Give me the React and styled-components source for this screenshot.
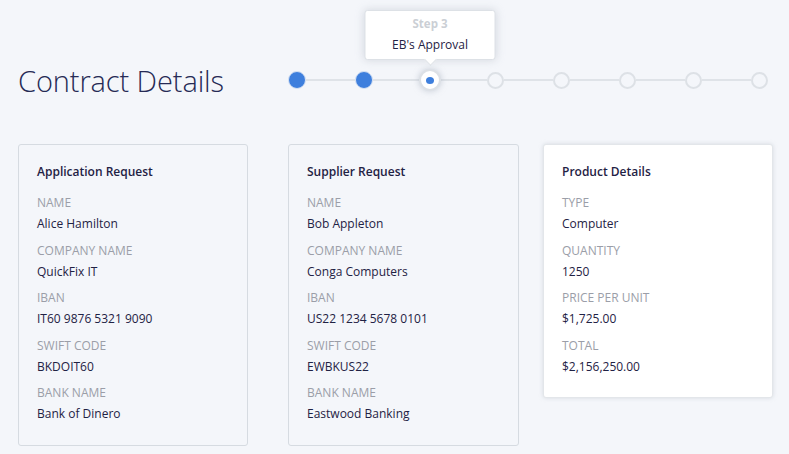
import React from 'react';
import styled, { createGlobalStyle } from 'styled-components';

const GlobalStyle = createGlobalStyle`
  html, body {
    margin: 0;
    padding: 0;
    background: #f4f6fa;
  }
  body {
    font-family: "Open Sans", "Noto Sans", sans-serif;
    color: #1f2244;
  }
`;

const Page = styled.div`
  width: 789px;
  height: 454px;
  overflow: hidden;
  box-sizing: border-box;
  padding: 0 0 0 18px;
`;

const Header = styled.div`
  display: flex;
  align-items: center;
  height: 144px;
`;

const HeaderInner = styled.div`
  display: flex;
  align-items: center;
  width: 100%;
  margin-top: 16px;
`;

const Title = styled.h1`
  margin: 0;
  width: 270px;
  font-size: 29px;
  font-weight: 300;
  color: #262a55;
  letter-spacing: -0.1px;
`;

const Stepper = styled.div`
  display: flex;
  align-items: center;
`;

const Line = styled.div`
  width: ${p => p.$w}px;
  height: 2px;
  background: #dfe3e8;
`;

const Step = styled.div`
  position: relative;
  box-sizing: border-box;
  width: ${p => (p.$state === 'done' ? 18 : p.$state === 'current' ? 22 : 17)}px;
  height: ${p => (p.$state === 'done' ? 18 : p.$state === 'current' ? 22 : 17)}px;
  border-radius: 50%;
  flex-shrink: 0;
  display: flex;
  align-items: center;
  justify-content: center;
  background: ${p => (p.$state === 'done' ? '#3e7fdd' : p.$state === 'current' ? '#ffffff' : '#f4f6fa')};
  border: ${p => (p.$state === 'done' ? '1px solid #d7e2f3' : '2px solid #dde1e6')};
  box-shadow: ${p => (p.$state === 'current' ? '0 0 6px rgba(160,170,185,0.55)' : 'none')};
`;

const Inner = styled.div`
  width: 8px;
  height: 7px;
  border-radius: 50%;
  background: #3e7fdd;
`;

const Tooltip = styled.div`
  position: absolute;
  left: 50%;
  bottom: 29px;
  transform: translateX(-50%);
  width: 131px;
  height: 50px;
  box-sizing: border-box;
  background: #fff;
  border: 1px solid #dde1e6;
  border-radius: 3px;
  box-shadow: 0 0 8px rgba(170, 178, 190, 0.45);
  display: flex;
  flex-direction: column;
  align-items: center;
  justify-content: center;
  gap: 6px;
  &::after {
    content: '';
    position: absolute;
    left: 50%;
    bottom: -5px;
    width: 8px;
    height: 8px;
    background: #fff;
    border-right: 1px solid #dde1e6;
    border-bottom: 1px solid #dde1e6;
    transform: translateX(-50%) rotate(45deg);
  }
`;

const StepNum = styled.div`
  font-size: 11.5px;
  font-weight: 700;
  color: #cbcfd5;
  line-height: 14px;
`;

const StepName = styled.div`
  font-size: 12px;
  color: #1f2244;
  line-height: 16px;
  white-space: nowrap;
`;

const Cards = styled.div`
  display: flex;
  align-items: flex-start;
`;

const Card = styled.div`
  box-sizing: border-box;
  width: ${p => p.$w}px;
  height: ${p => p.$h}px;
  margin-right: ${p => p.$mr || 0}px;
  padding: 19px 18px;
  border: 1px solid ${p => (p.$raised ? '#e3e6ea' : '#d6dbe1')};
  border-radius: 3px;
  background: ${p => (p.$raised ? '#ffffff' : '#f4f6fa')};
  box-shadow: ${p => (p.$raised ? '0 0 4px rgba(170,178,190,0.4)' : 'none')};
`;

const CardTitle = styled.div`
  font-size: 12px;
  font-weight: 600;
  color: #1f2244;
  line-height: 16px;
  margin-bottom: 15px;
`;

const Field = styled.div`
  margin-bottom: 10.5px;
`;

const Label = styled.div`
  font-size: 12px;
  color: #9b9ea8;
  line-height: 16px;
  text-transform: uppercase;
`;

const Value = styled.div`
  font-size: 12px;
  color: #1f2244;
  line-height: 16px;
  margin-top: 5px;
`;

const steps = ['done', 'done', 'current', 'todo', 'todo', 'todo', 'todo', 'todo'];

const cards = [
  {
    title: 'Application Request',
    w: 230, h: 302, mr: 40,
    fields: [
      ['Name', 'Alice Hamilton'],
      ['Company Name', 'QuickFix IT'],
      ['IBAN', 'IT60 9876 5321 9090'],
      ['Swift Code', 'BKDOIT60'],
      ['Bank Name', 'Bank of Dinero'],
    ],
  },
  {
    title: 'Supplier Request',
    w: 231, h: 302, mr: 24,
    fields: [
      ['Name', 'Bob Appleton'],
      ['Company Name', 'Conga Computers'],
      ['IBAN', 'US22 1234 5678 0101'],
      ['Swift Code', 'EWBKUS22'],
      ['Bank Name', 'Eastwood Banking'],
    ],
  },
  {
    title: 'Product Details',
    w: 230, h: 254, raised: true,
    fields: [
      ['Type', 'Computer'],
      ['Quantity', '1250'],
      ['Price per unit', '$1,725.00'],
      ['Total', '$2,156,250.00'],
    ],
  },
];

export default function App() {
  return (
    <>
      <GlobalStyle />
      <Page>
        <Header>
          <HeaderInner>
            <Title>Contract Details</Title>
            <Stepper>
              {steps.map((s, i) => (
                <React.Fragment key={i}>
                  {i > 0 && <Line $w={i === 2 || i === 3 ? 46 : 49} />}
                  <Step $state={s}>
                    {s === 'current' && (
                      <>
                        <Inner />
                        <Tooltip>
                          <StepNum>Step 3</StepNum>
                          <StepName>EB's Approval</StepName>
                        </Tooltip>
                      </>
                    )}
                  </Step>
                </React.Fragment>
              ))}
            </Stepper>
          </HeaderInner>
        </Header>
        <Cards>
          {cards.map(c => (
            <Card key={c.title} $w={c.w} $h={c.h} $mr={c.mr} $raised={c.raised}>
              <CardTitle>{c.title}</CardTitle>
              {c.fields.map(([l, v]) => (
                <Field key={l}>
                  <Label>{l}</Label>
                  <Value>{v}</Value>
                </Field>
              ))}
            </Card>
          ))}
        </Cards>
      </Page>
    </>
  );
}
